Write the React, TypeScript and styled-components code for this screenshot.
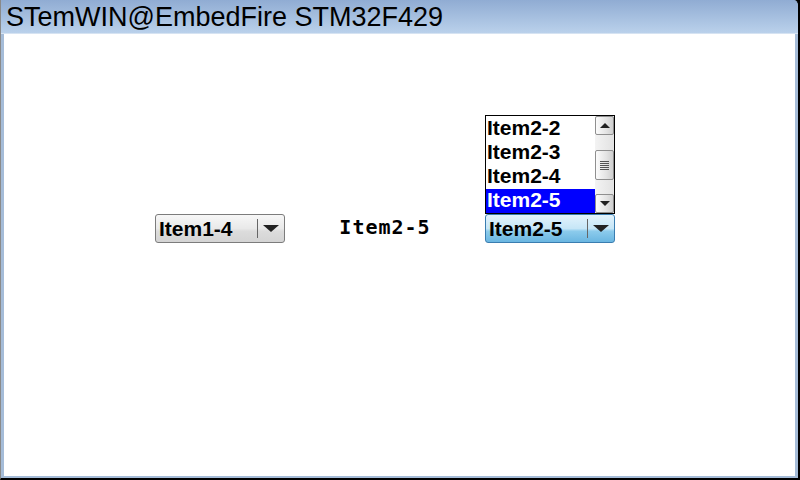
import React, { FC } from 'react';
import styled, { createGlobalStyle } from 'styled-components';

const GlobalStyle = createGlobalStyle`
  html, body {
    margin: 0;
    padding: 0;
    background: #000;
  }
  #root {
    width: 800px;
    height: 480px;
  }
`;

const Frame = styled.div`
  width: 800px;
  height: 480px;
  box-sizing: border-box;
  border-left: 1px solid #8a8a8a;
  border-right: 2px solid #000;
  border-bottom: 2px solid #000;
  border-top-right-radius: 6px;
  background: #a5bcd8;
  display: flex;
  flex-direction: column;
  overflow: hidden;
`;

const TitleBar = styled.div`
  height: 34px;
  flex: none;
  box-sizing: border-box;
  padding-left: 5px;
  background: linear-gradient(#90acd3, #bad1eb);
  border-bottom: 1px solid #d6e3f2;
  font-family: 'Liberation Sans', Arial, sans-serif;
  font-size: 27px;
  line-height: 34px;
  color: #000;
  white-space: nowrap;
`;

const ClientArea = styled.div`
  flex: 1;
  margin: 0 3px 2px 3px;
  background: #fff;
  padding: 180px 0 0 151px;
`;

const Row = styled.div`
  display: flex;
  align-items: center;
`;

const DropBox = styled.div<{ $active?: boolean }>`
  position: relative;
  width: 130px;
  height: 29px;
  box-sizing: border-box;
  border: 1px solid ${(p) => (p.$active ? '#3a7db0' : '#7c7c7c')};
  border-radius: 3px;
  background: ${(p) =>
    p.$active
      ? 'linear-gradient(#e3f3fc, #c6e6f7 50%, #8ccbec 60%, #6ab6e1)'
      : 'linear-gradient(#f7f7f7, #e9e9e9 50%, #dcdcdc 60%, #d4d4d4)'};
  display: flex;
  align-items: center;
`;

const DropText = styled.span`
  flex: 1;
  padding-left: 3px;
  font-family: 'Liberation Sans', Arial, sans-serif;
  font-weight: bold;
  font-size: 21px;
  line-height: 27px;
  color: #000;
`;

const DropButton = styled.div`
  width: 26px;
  height: 19px;
  border-left: 1px solid #666;
  display: flex;
  align-items: center;
  justify-content: center;
`;

const Arrow = styled.div<{ $up?: boolean; $size?: number }>`
  width: 0;
  height: 0;
  border-left: ${(p) => p.$size ?? 8}px solid transparent;
  border-right: ${(p) => p.$size ?? 8}px solid transparent;
  ${(p) =>
    p.$up
      ? `border-bottom: ${Math.round((p.$size ?? 8) * 0.9)}px solid #222;`
      : `border-top: ${Math.round((p.$size ?? 8) * 0.9)}px solid #222;`}
`;

const Label = styled.div`
  width: 200px;
  text-align: center;
  font-family: 'DejaVu Sans Mono', monospace;
  font-weight: bold;
  font-size: 20px;
  letter-spacing: 1px;
  color: #000;
  margin-top: -4px;
`;

const ListBox = styled.div`
  position: absolute;
  left: -1px;
  bottom: 100%;
  margin-bottom: 1px;
  width: 130px;
  height: 99px;
  box-sizing: border-box;
  border: 1px solid #000;
  background: #fff;
  display: flex;
`;

const Items = styled.div`
  flex: 1;
  padding-top: 1px;
`;

const ListItem = styled.div<{ $selected?: boolean }>`
  height: 24px;
  padding-left: 1px;
  font-family: 'Liberation Sans', Arial, sans-serif;
  font-weight: bold;
  font-size: 21px;
  line-height: 21px;
  background: ${(p) => (p.$selected ? '#0000ff' : 'transparent')};
  color: ${(p) => (p.$selected ? '#fff' : '#000')};
`;

const ScrollBar = styled.div`
  width: 19px;
  display: flex;
  flex-direction: column;
  background: linear-gradient(90deg, #f3f3f3, #e2e2e2);
`;

const ScrollButton = styled.div`
  height: 19px;
  box-sizing: border-box;
  border: 1px solid #8f8f8f;
  border-radius: 2px;
  background: linear-gradient(90deg, #fbfbfb, #e4e4e4 60%, #cfcfcf);
  display: flex;
  align-items: center;
  justify-content: center;
`;

const Track = styled.div`
  flex: 1;
  display: flex;
  flex-direction: column;
  padding-top: 15px;
`;

const Thumb = styled.div`
  height: 30px;
  box-sizing: border-box;
  border: 1px solid #8f8f8f;
  border-radius: 2px;
  background: linear-gradient(90deg, #fbfbfb, #e4e4e4 60%, #cfcfcf);
  display: flex;
  flex-direction: column;
  align-items: center;
  justify-content: center;
  gap: 1px;
`;

const Grip = styled.div`
  width: 9px;
  height: 1px;
  background: #555;
`;

const App: FC = () => {
  return (
    <>
      <GlobalStyle />
      <Frame>
        <TitleBar>STemWIN@EmbedFire STM32F429</TitleBar>
        <ClientArea>
          <Row>
            <DropBox>
              <DropText>Item1-4</DropText>
              <DropButton>
                <Arrow />
              </DropButton>
            </DropBox>
            <Label>Item2-5</Label>
            <DropBox $active>
              <ListBox>
                <Items>
                  <ListItem>Item2-2</ListItem>
                  <ListItem>Item2-3</ListItem>
                  <ListItem>Item2-4</ListItem>
                  <ListItem $selected>Item2-5</ListItem>
                </Items>
                <ScrollBar>
                  <ScrollButton>
                    <Arrow $up $size={5} />
                  </ScrollButton>
                  <Track>
                    <Thumb>
                      <Grip />
                      <Grip />
                      <Grip />
                      <Grip />
                      <Grip />
                    </Thumb>
                  </Track>
                  <ScrollButton>
                    <Arrow $size={5} />
                  </ScrollButton>
                </ScrollBar>
              </ListBox>
              <DropText>Item2-5</DropText>
              <DropButton>
                <Arrow />
              </DropButton>
            </DropBox>
          </Row>
        </ClientArea>
      </Frame>
    </>
  );
};

export default App;
